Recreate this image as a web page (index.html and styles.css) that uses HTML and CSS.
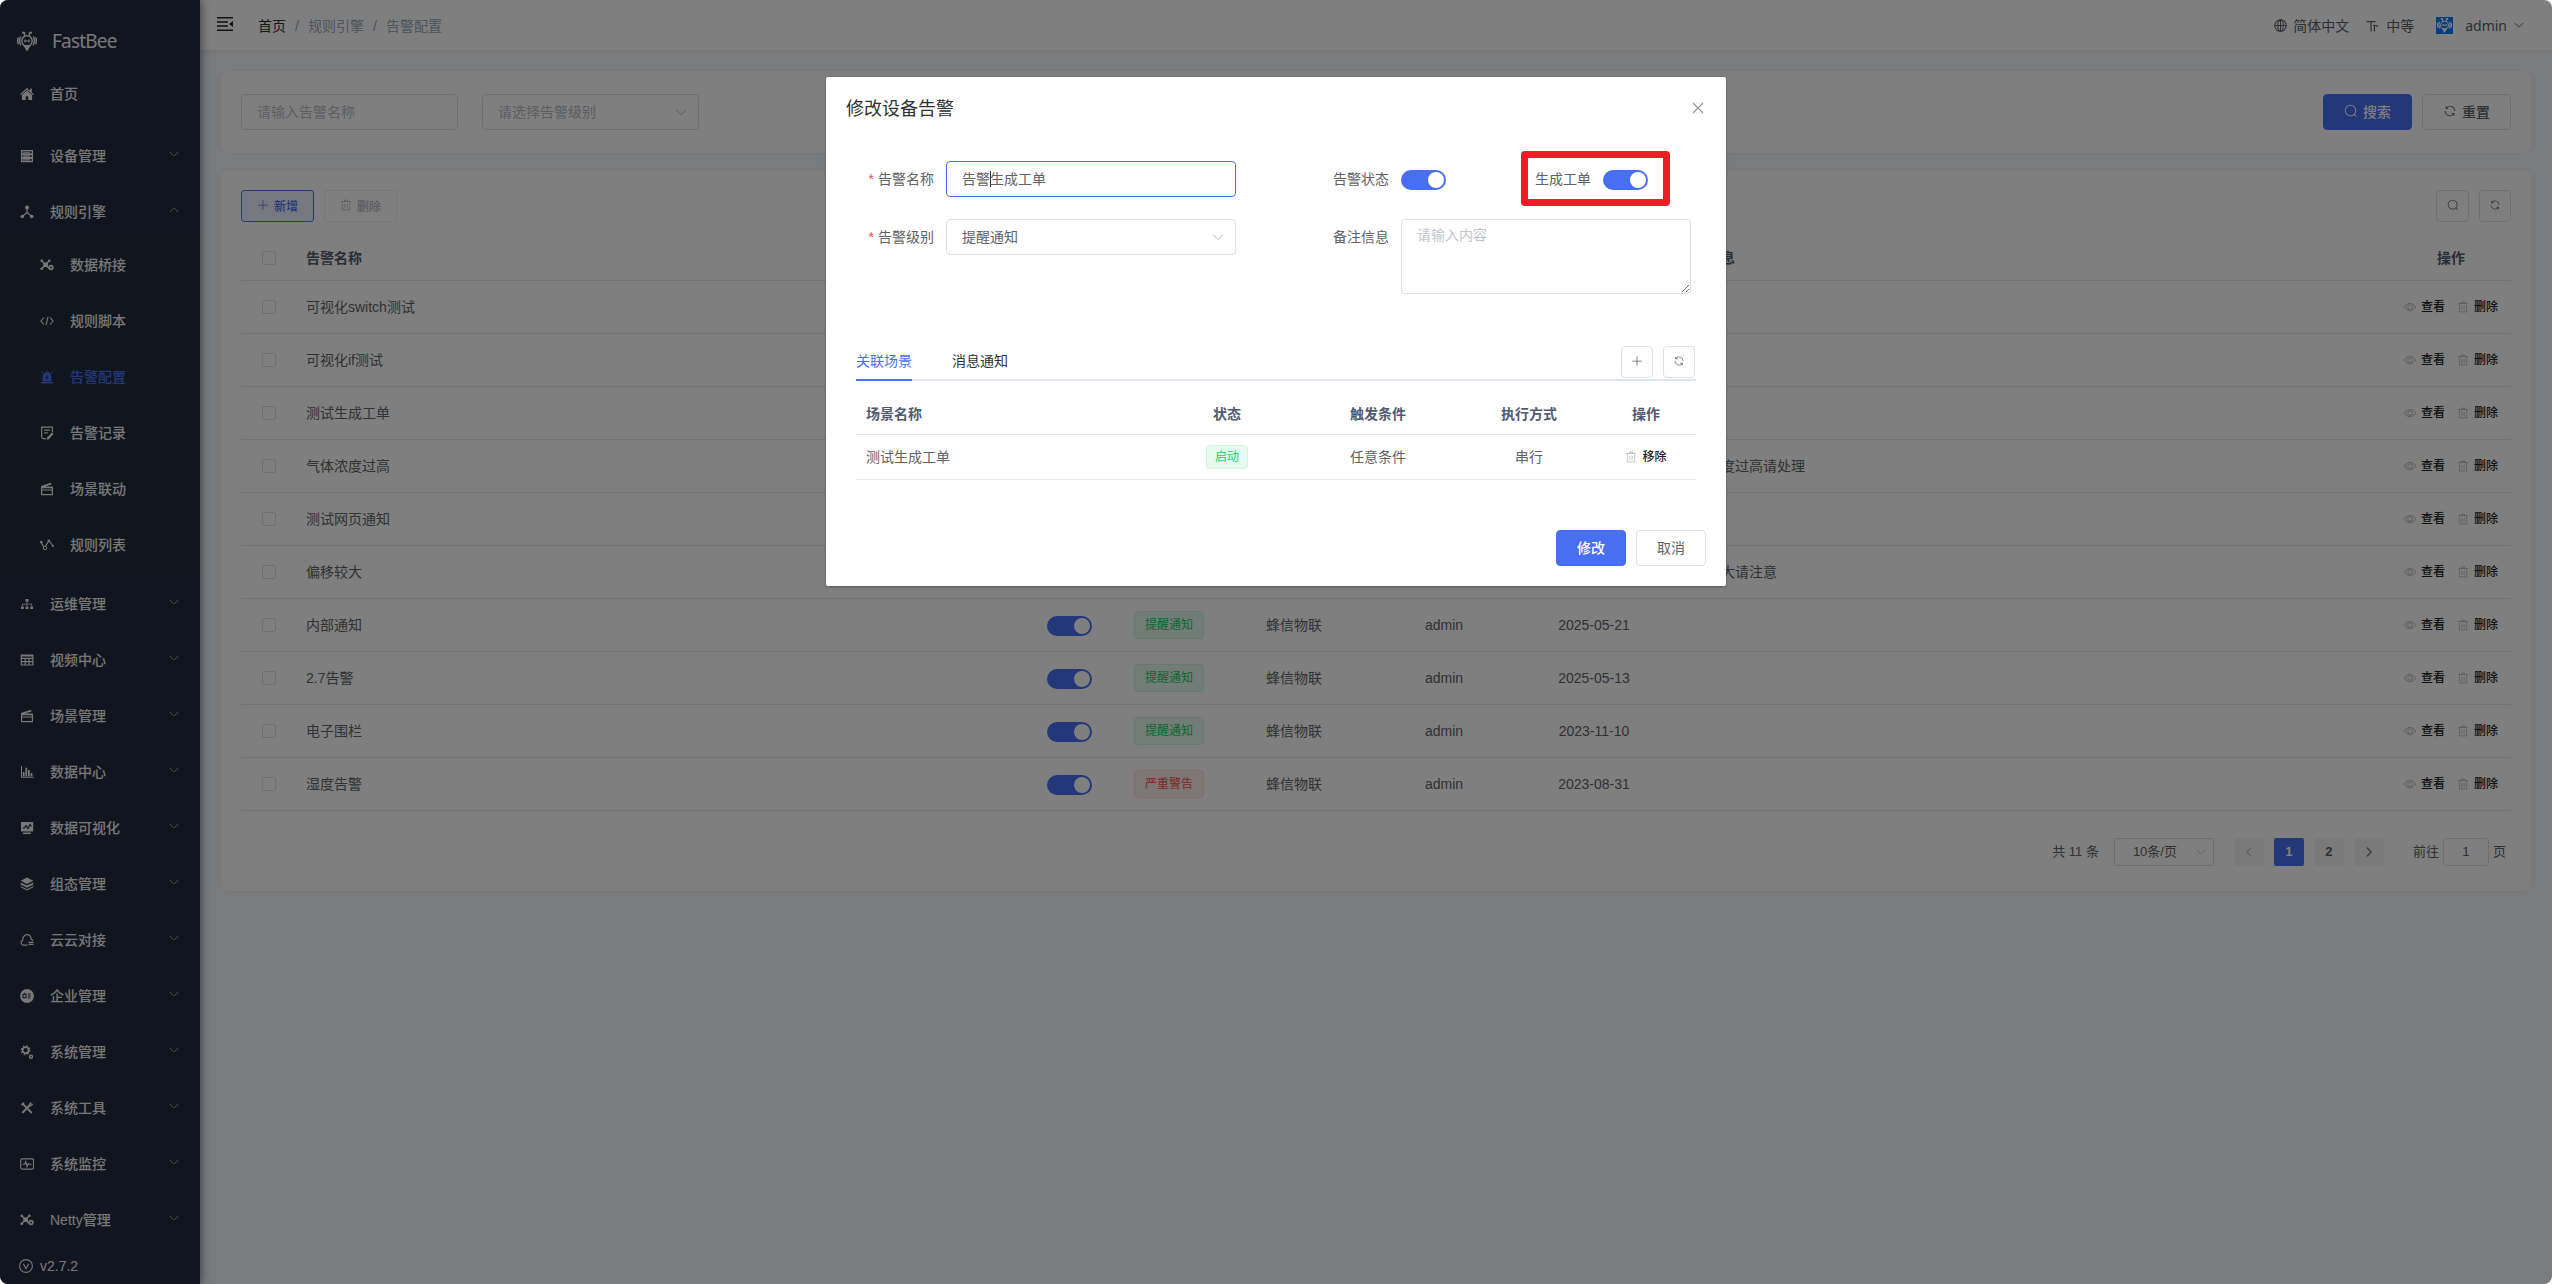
FILE: index.html
```html
<!DOCTYPE html>
<html lang="zh-CN">
<head>
  <meta charset="UTF-8">
  <meta name="viewport" content="width=device-width, initial-scale=1.0">
  <title>FastBee - 告警配置</title>
  <link rel="stylesheet" href="styles.css">
</head>
<body>
  <!-- icon set -->
  <svg class="sprite">
    <symbol id="i-bee" viewBox="0 0 20 20"><g fill="none" stroke="currentColor" stroke-width="1.5"><circle cx="10" cy="9.500" r="5.200"/><path d="M7.500 4.500V1.200H6M12.500 4.500V1.200H14M3.600 5c-1.300 2.800-1.300 6.200.2 9M16.400 5c1.300 2.800 1.300 6.200-.2 9M1.300 6c-.8 2.200-.8 4.600 0 6.800M18.700 6c.8 2.200.8 4.600 0 6.800"/><path d="M7.200 9.500h5.600M8 8v3M12 8v3" stroke-width="1.200"/></g><circle cx="6" cy="1.200" r="1.100" fill="currentColor"/><circle cx="14" cy="1.200" r="1.100" fill="currentColor"/><path d="M6 13.500h8l-4 6.500z" fill="currentColor"/></symbol>
    <symbol id="i-home" viewBox="0 0 14 14"><path fill="currentColor" d="M7 1 0 7.200l.9.900L7 2.800l6.100 5.300.9-.9-2.200-1.950V1.500h-1.700v2.200z"/><path fill="currentColor" d="M7 3.500 1.900 8v5h3.900V9.300h2.400V13h3.900V8z"/></symbol>
    <symbol id="i-device" viewBox="0 0 14 14"><path fill="none" stroke="currentColor" stroke-width="1.300" d="M1.600 1.600h10.800v3.200H1.600zM1.600 5.500h10.800v3.200H1.600zM1.600 9.300h10.800v3.200H1.600z"/><path stroke="currentColor" stroke-width="1.100" d="M3 3.200h7M3 7.100h7M3 10.900h7"/></symbol>
    <symbol id="i-rule" viewBox="0 0 14 14"><g fill="currentColor"><circle cx="7" cy="2.500" r="2"/><circle cx="2.300" cy="11.500" r="1.800"/><circle cx="11.700" cy="11.500" r="1.800"/></g><path fill="none" stroke="currentColor" stroke-width="1.200" d="M7 3v4.500L2.500 11.300M7 7.500l4.500 3.800"/></symbol>
    <symbol id="i-bridge" viewBox="0 0 14 14"><path fill="none" stroke="currentColor" stroke-width="1.300" d="M2 3l7 7.500M9 3 2 10.500"/><g fill="currentColor"><rect x="3.300" y="4.500" width="4.600" height="4.600" rx="1"/><circle cx="1.700" cy="2.800" r="1.300"/><circle cx="9.300" cy="2.800" r="1.300"/><circle cx="1.700" cy="10.800" r="1.300"/></g><circle cx="11" cy="9.500" r="1.800" fill="none" stroke="currentColor" stroke-width="1.700"/></symbol>
    <symbol id="i-code" viewBox="0 0 14 14"><path fill="none" stroke="currentColor" stroke-width="1.100" d="M4 3.500.9 7 4 10.500M10 3.500 13.100 7 10 10.500M8 2.800 6 11.200"/></symbol>
    <symbol id="i-alarm" viewBox="0 0 14 14"><path fill="currentColor" fill-rule="evenodd" d="M1 12h12v1.500H1zM2.600 11.600V6.400a4.400 4.400 0 0 1 8.800 0v5.200zM7.500 4.600 5.200 8h1.500l-.3 2.300L8.800 7H7.200zM1 2.300l1-.7 1 1.300-.8.600zM13 2.300l-1-.7-1 1.300.8.600zM6.500 0h1v1.400h-1z"/></symbol>
    <symbol id="i-note" viewBox="0 0 14 14"><path fill="none" stroke="currentColor" stroke-width="1.200" d="M6 12.600H3.200a1.500 1.500 0 0 1-1.500-1.500V1.200h10.600v5M4.200 4.200h5.600M4.200 6.800h3.500"/><path fill="currentColor" d="M12 6.500l1.500 1.300-4.600 5.400-2.300.6.600-2.300z"/></symbol>
    <symbol id="i-scene" viewBox="0 0 14 14"><path fill="none" stroke="currentColor" stroke-width="1.200" d="M1.600 5.500h10.800v7.200H1.600zM1.600 8h10.800"/><path fill="currentColor" d="M1 4 10.900.8l.7 1.700L5 4.600h8v1.600H1z"/></symbol>
    <symbol id="i-list" viewBox="0 0 14 14"><path fill="none" stroke="currentColor" stroke-width="1.200" d="M.9 4 4.300 10 9 2.500 12.900 8"/><g fill="currentColor"><circle cx="1.300" cy="4" r="1.200"/><circle cx="8.800" cy="2.700" r="1.200"/><circle cx="12.900" cy="8" r="1.100"/></g><circle cx="5" cy="10" r="1.800" fill="#1f2d3d" stroke="currentColor"/></symbol>
    <symbol id="i-tree" viewBox="0 0 14 14"><path fill="currentColor" d="M5.500 2h3v2.600h-3zM1 9.500h2.800V12H1zM5.600 9.500h2.800V12H5.600zM10.200 9.500H13V12h-2.800zM6.600 4.500h.8v4.500h-.8zM2 6.800h10v.8H2z"/><path stroke="currentColor" stroke-width=".8" d="M2.400 7v2M11.600 7v2"/></symbol>
    <symbol id="i-grid" viewBox="0 0 14 14"><path fill="none" stroke="currentColor" stroke-width="1.200" d="M1.300 2h11.600v10H1.300zM1.300 5.300h11.600M1.300 8.600h11.600M5.200 5.300V12M9 5.300V12M1.300 3h11.600"/></symbol>
    <symbol id="i-chart" viewBox="0 0 14 14"><path fill="currentColor" d="M1 1h1v10.800h11.500v1H1zM2.800 7h1.800v4.300H2.800zM5.400 2.800h1.800v8.500H5.400zM8 5h1.800v6.300H8zM10.600 8h1.800v3.300h-1.800z"/></symbol>
    <symbol id="i-monitor" viewBox="0 0 14 14"><path fill="currentColor" d="M1 1h12.200v9.500H1zM3 11.500h8V13H3z"/><path fill="none" stroke="#222a3f" stroke-width="1.200" d="M2.500 7h2l1.500-2.500L8 7.500l2-4 1.500 2"/></symbol>
    <symbol id="i-layers" viewBox="0 0 14 14"><path fill="currentColor" d="M7 .6 13.300 3.800 7 7 .7 3.800zM.7 5.400 7 8.600l6.300-3.200v2.200L7 10.800.7 7.600zM.7 9 7 12.200 13.300 9v1.300L7 13.600.7 10.300z"/></symbol>
    <symbol id="i-cloud" viewBox="0 0 14 14"><path fill="none" stroke="currentColor" stroke-width="1.200" d="M7.500 12.200H3.200A2.500 2.500 0 0 1 2.700 7.400C2.500 4 4.400 1.700 7 1.700s4 1.800 4.200 4.600a2 2 0 0 1 1.700 1.500M8.500 9.400h5M8.500 11.400h5"/></symbol>
    <symbol id="i-company" viewBox="0 0 14 14"><circle cx="7" cy="7" r="6.900" fill="currentColor"/><path fill="none" stroke="#222a3f" stroke-width="1.100" d="M3 5.200h3v3.500H3zM4.500 3.800v1.400M7.800 5h3M7.800 7h3M7.800 9h2.500"/></symbol>
    <symbol id="i-gears" viewBox="0 0 14 14"><circle cx="5.600" cy="5.200" r="3" fill="none" stroke="currentColor" stroke-width="1.700"/><circle cx="5.600" cy="5.200" r="4.300" fill="none" stroke="currentColor" stroke-width="1.300" stroke-dasharray="1.700 1.680"/><circle cx="11" cy="11.700" r="1.500" fill="none" stroke="currentColor" stroke-width="1.400"/></symbol>
    <symbol id="i-tools" viewBox="0 0 14 14"><path fill="none" stroke="currentColor" stroke-width="1.800" d="M2 2.200 11.800 12M9.500 4.500 2.200 12"/><path fill="none" stroke="currentColor" stroke-width="1.300" d="M11.500 1.500 9.400 3.400l1.200 1.400 2.200-1.900M1.500 4.200 4 1.700"/></symbol>
    <symbol id="i-pulse" viewBox="0 0 14 14"><rect x=".7" y="1.900" width="12.800" height="10.200" rx="1.500" fill="none" stroke="currentColor" stroke-width="1.100"/><path fill="none" stroke="currentColor" stroke-width="1.100" d="M2.500 7.300h2.200l1-2.800 1.400 5 1.200-3 .7.800h2.500"/></symbol>
    <symbol id="i-version" viewBox="0 0 14 14"><circle cx="7" cy="7" r="6.400" fill="none" stroke="currentColor" stroke-width="1.100"/><path fill="none" stroke="currentColor" stroke-width="1.200" d="M4.300 4.800 7 9.500l2.700-4.700"/></symbol>
    <symbol id="i-globe" viewBox="0 0 14 14"><g fill="none" stroke="currentColor" stroke-width="1.100"><circle cx="7" cy="7" r="6.200"/><ellipse cx="7" cy="7" rx="3" ry="6.200"/><path d="M.8 7h12.400M7 .8v12.400"/></g></symbol>
    <symbol id="i-size" viewBox="0 0 12 12"><path fill="none" stroke="currentColor" stroke-width="1.200" d="M.5 1.600h9M5 1.600V11.500M7 5.500h4.500M8.500 5.500v6M11.300 5.500v1.800"/></symbol>
    <symbol id="i-down" viewBox="0 0 1024 1024"><path fill="currentColor" d="M831.872 340.864 512 652.672 192.128 340.864a30.592 30.592 0 0 0-42.752 0 29.120 29.120 0 0 0 0 41.600L489.664 714.240a32 32 0 0 0 44.672 0l340.288-331.712a29.120 29.120 0 0 0 0-41.728 30.592 30.592 0 0 0-42.752 0z"/></symbol>
    <symbol id="i-search" viewBox="0 0 1024 1024"><path fill="currentColor" d="m795.904 750.720 124.992 124.928a32 32 0 0 1-45.248 45.248L750.656 795.904a416 416 0 1 1 45.248-45.248zM480 832a352 352 0 1 0 0-704 352 352 0 0 0 0 704z"/></symbol>
    <symbol id="i-refresh" viewBox="0 0 1024 1024"><path fill="currentColor" d="M771.776 794.880A384 384 0 0 1 128 512h64a320 320 0 0 0 555.712 216.448H654.720a32 32 0 1 1 0-64h149.056a32 32 0 0 1 32 32v148.928a32 32 0 1 1-64 0v-50.560zM276.288 295.616h92.992a32 32 0 0 1 0 64H220.160a32 32 0 0 1-32-32V178.560a32 32 0 0 1 64 0v50.560A384 384 0 0 1 896.128 512h-64a320 320 0 0 0-555.776-216.384z"/></symbol>
    <symbol id="i-delete" viewBox="0 0 1024 1024"><path fill="currentColor" d="M160 256H96a32 32 0 0 1 0-64h256V95.936a32 32 0 0 1 32-32h256a32 32 0 0 1 32 32V192h256a32 32 0 1 1 0 64h-64v672a32 32 0 0 1-32 32H192a32 32 0 0 1-32-32zm448-64v-64H416v64zM224 896h576V256H224zm192-128a32 32 0 0 1-32-32V416a32 32 0 0 1 64 0v320a32 32 0 0 1-32 32m192 0a32 32 0 0 1-32-32V416a32 32 0 0 1 64 0v320a32 32 0 0 1-32 32"/></symbol>
    <symbol id="i-view" viewBox="0 0 1024 1024"><path fill="currentColor" d="M512 160c320 0 512 352 512 352S832 864 512 864 0 512 0 512s192-352 512-352m0 64c-225.280 0-384.128 208.064-436.800 288 52.608 79.872 211.456 288 436.800 288 225.280 0 384.128-208.064 436.800-288-52.608-79.872-211.456-288-436.800-288zm0 64a224 224 0 1 1 0 448 224 224 0 0 1 0-448m0 64a160.192 160.192 0 0 0-160 160c0 88.192 71.744 160 160 160s160-71.808 160-160-71.744-160-160-160"/></symbol>
    <symbol id="i-plus" viewBox="0 0 1024 1024"><path fill="currentColor" d="M480 480V128a32 32 0 0 1 64 0v352h352a32 32 0 1 1 0 64H544v352a32 32 0 1 1-64 0V544H128a32 32 0 0 1 0-64z"/></symbol>
    <symbol id="i-close" viewBox="0 0 12 12"><path fill="none" stroke="currentColor" stroke-width="1.100" d="M1 1l10 10M11 1 1 11"/></symbol>
    <symbol id="i-fold" viewBox="0 0 16 14"><path fill="currentColor" d="M0 0h16v1.500H0zM0 4.200h11v1.500H0zM0 8.300h11v1.500H0zM0 12.500h16V14H0zM16 4v6l-4-3z"/></symbol>
  </svg>

  <div class="app">
    <aside class="sidebar">
      <div class="logo"><svg class="bee"><use href="#i-bee"/></svg><span>FastBee</span></div>
      <div class="menu-home"><svg class="icon"><use href="#i-home"/></svg><span>首页</span></div>
      <ul class="menu">
        <li><svg class="icon"><use href="#i-device"/></svg><span>设备管理</span><svg class="arrow"><use href="#i-down"/></svg></li>
        <li><svg class="icon"><use href="#i-rule"/></svg><span>规则引擎</span><svg class="arrow up"><use href="#i-down"/></svg></li>
      </ul>
      <ul class="submenu">
        <li><svg class="icon"><use href="#i-bridge"/></svg><span>数据桥接</span></li>
        <li><svg class="icon"><use href="#i-code"/></svg><span>规则脚本</span></li>
        <li class="active"><svg class="icon"><use href="#i-alarm"/></svg><span>告警配置</span></li>
        <li><svg class="icon"><use href="#i-note"/></svg><span>告警记录</span></li>
        <li><svg class="icon"><use href="#i-scene"/></svg><span>场景联动</span></li>
        <li><svg class="icon"><use href="#i-list"/></svg><span>规则列表</span></li>
      </ul>
      <ul class="menu">
        <li><svg class="icon"><use href="#i-tree"/></svg><span>运维管理</span><svg class="arrow"><use href="#i-down"/></svg></li>
        <li><svg class="icon"><use href="#i-grid"/></svg><span>视频中心</span><svg class="arrow"><use href="#i-down"/></svg></li>
        <li><svg class="icon"><use href="#i-scene"/></svg><span>场景管理</span><svg class="arrow"><use href="#i-down"/></svg></li>
        <li><svg class="icon"><use href="#i-chart"/></svg><span>数据中心</span><svg class="arrow"><use href="#i-down"/></svg></li>
        <li><svg class="icon"><use href="#i-monitor"/></svg><span>数据可视化</span><svg class="arrow"><use href="#i-down"/></svg></li>
        <li><svg class="icon"><use href="#i-layers"/></svg><span>组态管理</span><svg class="arrow"><use href="#i-down"/></svg></li>
        <li><svg class="icon"><use href="#i-cloud"/></svg><span>云云对接</span><svg class="arrow"><use href="#i-down"/></svg></li>
        <li><svg class="icon"><use href="#i-company"/></svg><span>企业管理</span><svg class="arrow"><use href="#i-down"/></svg></li>
        <li><svg class="icon"><use href="#i-gears"/></svg><span>系统管理</span><svg class="arrow"><use href="#i-down"/></svg></li>
        <li><svg class="icon"><use href="#i-tools"/></svg><span>系统工具</span><svg class="arrow"><use href="#i-down"/></svg></li>
        <li><svg class="icon"><use href="#i-pulse"/></svg><span>系统监控</span><svg class="arrow"><use href="#i-down"/></svg></li>
        <li><svg class="icon"><use href="#i-bridge"/></svg><span>Netty管理</span><svg class="arrow"><use href="#i-down"/></svg></li>
      </ul>
      <div class="version"><svg class="icon"><use href="#i-version"/></svg><span>v2.7.2</span></div>
    </aside>

    <div class="main">
      <header class="navbar">
        <svg class="fold"><use href="#i-fold"/></svg>
        <div class="breadcrumb"><b>首页</b><i>/</i><span>规则引擎</span><i>/</i><span>告警配置</span></div>
        <div class="nav-right">
          <div class="lang"><svg><use href="#i-globe"/></svg>简体中文</div>
          <div class="size"><svg><use href="#i-size"/></svg>中等</div>
          <div class="user"><span class="avatar"><svg><use href="#i-bee"/></svg></span><span>admin</span><svg class="caret"><use href="#i-down"/></svg></div>
        </div>
      </header>

      <section class="card search-card">
        <div class="field">请输入告警名称</div>
        <div class="field">请选择告警级别<svg class="caret"><use href="#i-down"/></svg></div>
        <div class="search-actions">
          <button class="btn primary"><svg><use href="#i-search"/></svg>搜索</button>
          <button class="btn"><svg><use href="#i-refresh"/></svg>重置</button>
        </div>
      </section>

      <section class="card table-card">
        <div class="toolbar">
          <button class="btn small plain"><svg><use href="#i-plus"/></svg>新增</button>
          <button class="btn small disabled"><svg><use href="#i-delete"/></svg>删除</button>
          <div class="tools">
            <button class="btn square wide"><svg><use href="#i-search"/></svg></button>
            <button class="btn square"><svg><use href="#i-refresh"/></svg></button>
          </div>
        </div>

        <table class="table alert-table">
          <colgroup><col class="w55"><col class="w723"><col class="w100"><col class="w100"><col class="w150"><col class="w150"><col class="w150"><col><col class="w120"></colgroup>
          <thead>
            <tr><th><span class="check"></span></th><th class="left">告警名称</th><th></th><th></th><th></th><th></th><th></th><th class="left">备注信息</th><th>操作</th></tr>
          </thead>
          <tbody>
            <tr><td><span class="check"></span></td><td class="left">可视化switch测试</td><td></td><td></td><td></td><td></td><td></td><td></td><td><div class="ops"><svg><use href="#i-view"/></svg><span>查看</span><svg><use href="#i-delete"/></svg><span>删除</span></div></td></tr>
            <tr><td><span class="check"></span></td><td class="left">可视化if测试</td><td></td><td></td><td></td><td></td><td></td><td></td><td><div class="ops"><svg><use href="#i-view"/></svg><span>查看</span><svg><use href="#i-delete"/></svg><span>删除</span></div></td></tr>
            <tr><td><span class="check"></span></td><td class="left">测试生成工单</td><td></td><td></td><td></td><td></td><td></td><td></td><td><div class="ops"><svg><use href="#i-view"/></svg><span>查看</span><svg><use href="#i-delete"/></svg><span>删除</span></div></td></tr>
            <tr><td><span class="check"></span></td><td class="left">气体浓度过高</td><td></td><td></td><td></td><td></td><td></td><td class="left">气体浓度过高请处理</td><td><div class="ops"><svg><use href="#i-view"/></svg><span>查看</span><svg><use href="#i-delete"/></svg><span>删除</span></div></td></tr>
            <tr><td><span class="check"></span></td><td class="left">测试网页通知</td><td></td><td></td><td></td><td></td><td></td><td></td><td><div class="ops"><svg><use href="#i-view"/></svg><span>查看</span><svg><use href="#i-delete"/></svg><span>删除</span></div></td></tr>
            <tr><td><span class="check"></span></td><td class="left">偏移较大</td><td></td><td></td><td></td><td></td><td></td><td class="left">偏移较大请注意</td><td><div class="ops"><svg><use href="#i-view"/></svg><span>查看</span><svg><use href="#i-delete"/></svg><span>删除</span></div></td></tr>
            <tr><td><span class="check"></span></td><td class="left">内部通知</td><td><span class="switch"></span></td><td><span class="tag success">提醒通知</span></td><td>蜂信物联</td><td>admin</td><td>2025-05-21</td><td></td><td><div class="ops"><svg><use href="#i-view"/></svg><span>查看</span><svg><use href="#i-delete"/></svg><span>删除</span></div></td></tr>
            <tr><td><span class="check"></span></td><td class="left">2.7告警</td><td><span class="switch"></span></td><td><span class="tag success">提醒通知</span></td><td>蜂信物联</td><td>admin</td><td>2025-05-13</td><td></td><td><div class="ops"><svg><use href="#i-view"/></svg><span>查看</span><svg><use href="#i-delete"/></svg><span>删除</span></div></td></tr>
            <tr><td><span class="check"></span></td><td class="left">电子围栏</td><td><span class="switch"></span></td><td><span class="tag success">提醒通知</span></td><td>蜂信物联</td><td>admin</td><td>2023-11-10</td><td></td><td><div class="ops"><svg><use href="#i-view"/></svg><span>查看</span><svg><use href="#i-delete"/></svg><span>删除</span></div></td></tr>
            <tr><td><span class="check"></span></td><td class="left">湿度告警</td><td><span class="switch"></span></td><td><span class="tag danger">严重警告</span></td><td>蜂信物联</td><td>admin</td><td>2023-08-31</td><td></td><td><div class="ops"><svg><use href="#i-view"/></svg><span>查看</span><svg><use href="#i-delete"/></svg><span>删除</span></div></td></tr>
          </tbody>
        </table>

        <div class="pagination">
          <span class="total">共 11 条</span>
          <div class="page-size">10条/页<svg><use href="#i-down"/></svg></div>
          <div class="pager">
            <span class="page prev"><svg><use href="#i-down"/></svg></span>
            <span class="page current">1</span>
            <span class="page">2</span>
            <span class="page next"><svg><use href="#i-down"/></svg></span>
          </div>
          <div class="jump">前往<span class="jump-input">1</span>页</div>
        </div>
      </section>
    </div>

    <div class="overlay">
      <div class="dialog">
        <div class="dialog-header"><span>修改设备告警</span><svg><use href="#i-close"/></svg></div>
        <div class="form">
          <div class="form-left">
            <div class="form-item"><label class="required">告警名称</label><div class="control focus">告警<span class="cursor"></span>生成工单</div></div>
            <div class="form-item"><label class="required">告警级别</label><div class="control">提醒通知<svg class="caret"><use href="#i-down"/></svg></div></div>
          </div>
          <div class="form-right">
            <div class="form-item switches">
              <label>告警状态</label><span class="switch"></span>
              <div class="marked"><label>生成工单</label><span class="switch"></span></div>
            </div>
            <div class="form-item"><label>备注信息</label><textarea class="remark" placeholder="请输入内容"></textarea></div>
          </div>
        </div>

        <div class="tabs">
          <span class="tab active">关联场景</span>
          <span class="tab">消息通知</span>
          <div class="tab-tools">
            <button class="btn square"><svg><use href="#i-plus"/></svg></button>
            <button class="btn square"><svg><use href="#i-refresh"/></svg></button>
          </div>
        </div>

        <table class="table scene-table">
          <colgroup><col><col class="w134"><col class="w168"><col class="w134"><col class="w100"></colgroup>
          <thead><tr><th class="left">场景名称</th><th>状态</th><th>触发条件</th><th>执行方式</th><th>操作</th></tr></thead>
          <tbody>
            <tr><td class="left">测试生成工单</td><td><span class="tag success mini">启动</span></td><td>任意条件</td><td>串行</td><td><div class="ops"><svg><use href="#i-delete"/></svg><span>移除</span></div></td></tr>
          </tbody>
        </table>

        <div class="dialog-footer">
          <button class="btn primary">修改</button>
          <button class="btn cancel">取消</button>
        </div>
      </div>
    </div>
  </div>
</body>
</html>
```

FILE: styles.css
```css
* {
  box-sizing: border-box;
}

body {
  margin: 0;
  background: #fff;
  color: #606266;
  font-family: "Liberation Sans", "Noto Sans CJK SC", sans-serif;
  font-size: 14px;
  line-height: 20px;
}

ul {
  list-style: none;
  margin: 0;
  padding: 0;
}

svg {
  display: block;
  flex: none;
}

.sprite {
  position: absolute;
  width: 0;
  height: 0;
}

.app {
  position: relative;
  display: flex;
  height: 1284px;
  border-radius: 8px;
  overflow: hidden;
  background: #f5f7f9;
}

/* sidebar */
.sidebar {
  width: 200px;
  flex: none;
  z-index: 1;
  background: #222a3f;
  color: #f0f0f0;
  box-shadow: 2px 0 8px rgba(0, 21, 41, 0.45);
}

.logo {
  display: flex;
  align-items: center;
  height: 63px;
  padding: 19px 0 0 17px;
  gap: 15px;
  font-family: "Noto Sans", sans-serif;
  font-size: 19px;
  letter-spacing: -0.8px;
}

.bee {
  width: 20px;
  height: 21px;
}

.icon {
  width: 14px;
  height: 14px;
  margin: -1px 16px 0 0;
}

.menu-home,
.menu li,
.submenu li {
  display: flex;
  align-items: center;
  height: 50px;
  padding: 0 20px;
  font-weight: 500;
}

.menu-home {
  margin: 6px 0;
}

.menu {
  display: flow-root;
}

.menu li {
  margin-top: 6px;
}

.submenu {
  background: #1f2d3a;
}

.submenu li {
  height: 56px;
  padding-left: 40px;
}

.submenu .active {
  color: #486ff2;
}

.arrow {
  width: 12px;
  height: 12px;
  margin: -4px 0 0 auto;
  opacity: 0.7;
}

.up {
  transform: rotate(180deg);
}

.version {
  display: flex;
  align-items: center;
  height: 38px;
  margin-top: 2px;
  padding-left: 19px;
}

.version .icon {
  margin: 0 7px 0 0;
}

/* top bar */
.main {
  flex: 1;
  min-width: 0;
}

.navbar {
  display: flex;
  align-items: center;
  height: 50px;
  padding: 1px 27px 0 17px;
  background: #fff;
  box-shadow: 0 1px 4px rgba(0, 21, 41, 0.1);
}

.fold {
  width: 16px;
  height: 14px;
  margin: -3px 25px 0 0;
  color: #222;
}

.breadcrumb {
  display: flex;
  color: #97a8be;
}

.breadcrumb b {
  color: #303133;
  font-weight: 400;
}

.breadcrumb i {
  width: 22px;
  text-align: center;
  font-style: normal;
}

.nav-right,
.nav-right > div {
  display: flex;
  align-items: center;
}

.nav-right {
  margin-left: auto;
  color: #5a5e66;
}

.lang svg {
  width: 13px;
  height: 13px;
  margin-right: 6px;
}

.size {
  margin-left: 17px;
}

.size svg {
  width: 12px;
  height: 12px;
  margin-right: 8px;
}

.user {
  margin-left: 22px;
  font-family: "Noto Sans", sans-serif;
}

.avatar {
  padding: 1px;
  margin-right: 12px;
  background: #0a7cf0;
  color: #fff;
}

.avatar svg {
  width: 15px;
  height: 15px;
}

.caret {
  width: 14px;
  height: 14px;
}

.user .caret {
  width: 12px;
  height: 12px;
  margin: -2px 0 0 6px;
}

/* cards */
.card {
  border: 1px solid #ebeef5;
  border-radius: 8px;
  background: #fff;
}

.search-card {
  display: flex;
  gap: 24px;
  height: 84px;
  margin: 20px 20px 15px;
  padding: 23px 20px;
}

.field,
.control {
  display: flex;
  align-items: center;
  height: 36px;
  border: 1px solid #dcdfe6;
  border-radius: 4px;
  padding: 0 10px 0 15px;
}

.field {
  width: 217px;
  color: #b8bbc2;
}

.field .caret,
.control .caret {
  margin-left: auto;
  color: #b8bbc2;
}

.search-actions {
  display: flex;
  gap: 10px;
  margin-left: auto;
}

.btn {
  display: flex;
  align-items: center;
  justify-content: center;
  gap: 5px;
  width: 89px;
  height: 36px;
  border: 1px solid #dcdfe6;
  border-radius: 4px;
  padding: 0 0 2px;
  background: #fff;
  color: #606266;
  font-family: inherit;
  font-size: 14px;
  font-weight: 500;
}

.btn svg {
  width: 14px;
  height: 14px;
}

.btn.primary {
  border-color: #486ff2;
  background: #486ff2;
  color: #fff;
}

.btn.cancel {
  font-weight: 400;
}

.btn.small {
  width: 73px;
  height: 32px;
  border-radius: 3px;
  font-size: 12px;
}

.btn.small svg {
  width: 12px;
  height: 12px;
}

.btn.plain {
  border-color: #486ff2;
  background: #edf1fe;
  color: #486ff2;
}

.btn.disabled {
  border-color: #ebeef5;
  color: #b4b7be;
}

.btn.square {
  width: 32px;
  height: 32px;
}

.btn.square.wide {
  width: 33px;
}

.btn.square svg {
  width: 12px;
  height: 12px;
}

.table-card {
  height: 723px;
  margin: 0 20px;
  padding: 20px;
}

.toolbar {
  display: flex;
  gap: 10px;
  margin-bottom: 14px;
}

.tools {
  display: flex;
  gap: 10px;
  margin-left: auto;
}

/* tables */
.table {
  width: 100%;
  table-layout: fixed;
  border-collapse: separate;
  border-spacing: 0;
}

.table th,
.table td {
  padding: 0 10px;
  border-bottom: 1px solid #e4e7ed;
  text-align: center;
}

.table th {
  height: 45px;
  color: #515a6e;
  font-weight: 700;
}

.table td {
  height: 53px;
}

.table .left {
  text-align: left;
}

.w55 { width: 55px; }
.w100 { width: 100px; }
.w120 { width: 120px; }
.w134 { width: 134px; }
.w150 { width: 150px; }
.w168 { width: 168px; }
.w723 { width: 723px; }

.check {
  display: block;
  width: 14px;
  height: 14px;
  margin: 0 auto;
  border: 1px solid #dcdfe6;
  border-radius: 2px;
}

.ops {
  display: flex;
  align-items: center;
  justify-content: center;
  color: #222;
  font-size: 12px;
  font-weight: 500;
}

.ops svg {
  width: 12px;
  height: 12px;
  margin-right: 5px;
  color: #b0b3b8;
}

.ops span + svg {
  margin-left: 12px;
}

.switch {
  display: block;
  width: 45px;
  height: 20px;
  flex: none;
  padding: 2px;
  border-radius: 10px;
  background: #486ff2;
}

.switch::after {
  content: "";
  display: block;
  width: 16px;
  height: 16px;
  margin-left: auto;
  border-radius: 50%;
  background: #fff;
}

.table .switch {
  margin: 2px auto 0;
}

.tag {
  display: inline-block;
  height: 28px;
  border: 1px solid;
  border-radius: 4px;
  padding: 0 10px;
  font-size: 12px;
  line-height: 26px;
  vertical-align: middle;
}

.tag.success {
  border-color: #d0f5e0;
  background: #e7faf0;
  color: #13ce66;
}

.tag.danger {
  border-color: #ffdbdb;
  background: #ffeded;
  color: #ff4949;
}

.tag.mini {
  height: 24px;
  padding: 0 8px;
  line-height: 22px;
}

/* pagination */
.pagination {
  display: flex;
  align-items: center;
  height: 28px;
  margin-top: 27px;
  padding-right: 5px;
  justify-content: flex-end;
}

.pagination,
.page-size {
  font-size: 13px;
}

.page-size {
  display: flex;
  align-items: center;
  justify-content: flex-end;
  gap: 18px;
  width: 100px;
  height: 28px;
  margin: 0 20px 0 15px;
  padding-right: 6px;
  border: 1px solid #dcdfe6;
  border-radius: 3px;
}

.page-size svg {
  width: 12px;
  height: 12px;
  color: #b8bbc2;
}

.pager {
  display: flex;
  gap: 10px;
}

.page {
  display: flex;
  align-items: center;
  justify-content: center;
  width: 30px;
  height: 28px;
  border-radius: 2px;
  background: #f4f4f5;
  font-weight: 700;
}

.page.current {
  background: #486ff2;
  color: #fff;
}

.page svg {
  width: 12px;
  height: 12px;
  stroke: currentColor;
  stroke-width: 50;
}

.prev {
  color: #b8bbc2;
}

.prev svg {
  transform: rotate(90deg);
}

.next svg {
  transform: rotate(-90deg);
}

.jump {
  display: flex;
  align-items: center;
  margin-left: 29px;
}

.jump-input {
  width: 46px;
  height: 28px;
  margin: 0 4px;
  border: 1px solid #dcdfe6;
  border-radius: 3px;
  line-height: 26px;
  text-align: center;
}

/* edit dialog */
.overlay {
  position: absolute;
  inset: 0;
  z-index: 10;
  background: rgba(0, 0, 0, 0.5);
}

.dialog {
  width: 900px;
  height: 509px;
  margin: 77px auto 0;
  padding: 20px;
  border-radius: 2px;
  background: #fff;
  box-shadow: 0 1px 3px rgba(0, 0, 0, 0.3);
}

.dialog-header {
  display: flex;
  align-items: center;
  justify-content: space-between;
  height: 24px;
  padding-right: 2px;
  color: #303133;
  font-size: 18px;
}

.dialog-header svg {
  width: 12px;
  height: 12px;
  margin-top: -2px;
  color: #909399;
}

.form {
  display: flex;
  height: 185px;
  padding-top: 40px;
}

.form-left {
  width: 455px;
}

.form-item {
  display: flex;
  margin-bottom: 22px;
}

.form-item label {
  width: 100px;
  flex: none;
  padding-right: 12px;
  line-height: 36px;
  text-align: right;
}

.required::before {
  content: "*";
  margin-right: 4px;
  color: #ff4949;
}

.control {
  width: 290px;
}

.focus {
  border-color: #486ff2;
}

.cursor {
  width: 1px;
  height: 16px;
  margin-right: -1px;
  background: #303133;
}

.switches {
  align-items: center;
  height: 36px;
}

.switches .switch {
  margin-top: 2px;
}

.switches .marked {
  display: flex;
  align-items: center;
  width: 149px;
  height: 55px;
  margin: -1px 0 0 75px;
  border: 7px solid #ee1c25;
  border-radius: 4px;
  padding: 1px 0 0 6px;
}

.form-right .marked label {
  width: 69px;
}

.remark {
  width: 290px;
  height: 75px;
  border: 1px solid #dcdfe6;
  border-radius: 4px;
  padding: 5px 15px;
  font: inherit;
  line-height: 21px;
}

.remark::placeholder {
  color: #c0c4cc;
}

.tabs {
  display: flex;
  height: 42px;
  margin: 33px 10px 0;
  padding-top: 4px;
  gap: 40px;
  border-bottom: 2px solid #dfe4ed;
}

.tab {
  height: 38px;
  color: #303133;
  line-height: 36px;
}

.tab.active {
  border-bottom: 2px solid #486ff2;
  color: #486ff2;
}

.tab-tools {
  display: flex;
  gap: 10px;
  margin: 3px 1px 0 auto;
}

.scene-table {
  width: 840px;
  margin: 10px 10px 0;
}

.scene-table th {
  height: 44px;
  padding-top: 2px;
}

.scene-table td {
  height: 45px;
}

.dialog-footer {
  display: flex;
  justify-content: flex-end;
  gap: 10px;
  margin-top: 50px;
}

.dialog-footer .btn {
  width: 70px;
}
```
